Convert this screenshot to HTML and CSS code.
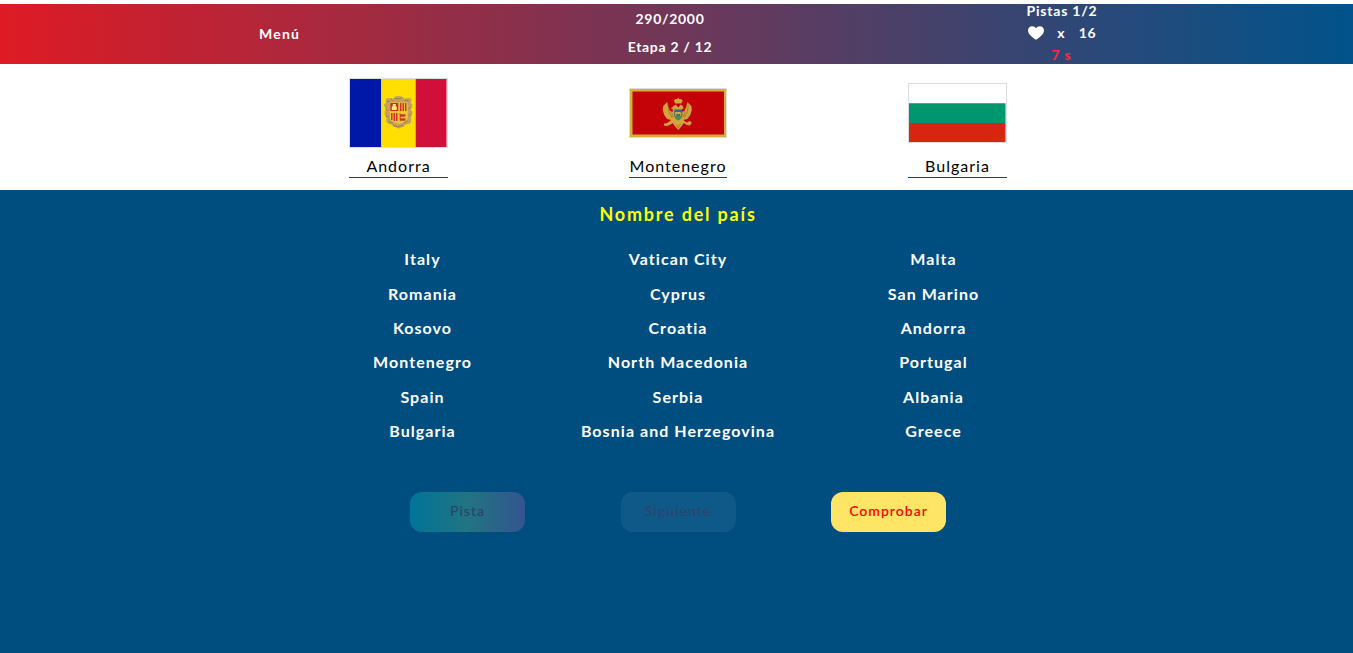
FILE: index.html
```html
<!DOCTYPE html>
<html lang="es">
<head>
<meta charset="utf-8">
<title>Banderas</title>
<link rel="stylesheet" href="styles.css">
</head>
<body>
<header class="topbar">
  <a class="menu">Menú</a>
  <div class="progress"><span>290/2000</span><span>Etapa 2 / 12</span></div>
  <div class="status">
    <span>Pistas 1/2</span>
    <span class="lives"><svg class="heart" viewBox="0 0 16 14"><path d="M8 13.800C6.300 12.700 0 9 0 4.600C0 1.800 1.800 .2 4.100 .2C5.800 .2 7.200 1 8 2.200C8.800 1 10.200 .2 11.900 .2C14.200 .2 16 1.800 16 4.600C16 9 9.700 12.700 8 13.800Z" fill="#fff"/></svg><span>x</span><span>16</span></span>
    <span class="timer">7 s</span>
  </div>
</header>
<section class="flags">
  <figure class="card">
    <div class="frame">
      <svg class="flag andorra" viewBox="0 0 97 68" preserveAspectRatio="none">
        <path d="M0 0h31.500v68H0z" fill="#0018a8"/><path d="M31.500 0H66v68H31.500z" fill="#fedf00"/><path d="M66 0h31v68H66z" fill="#d0103a"/>
        <path d="M36 20q4-2 7 0q2-3 6-3t6 3q4-2 7 0l-1 4q3 1 1 4l-1 3q3 2 1 5l-1 3q2 4-2 6q-4 0-5 3q-4 0-5 2q-1-2-5-2q-1-3-5-3q-4-2-2-6l-2-3q-1-3 1-5l-1-3q-2-3 1-4z" fill="#c2a25c"/>
        <path d="M37 22l3 1M41 20l2 2M45 19l3 1l4-1M55 21l4 1M36 30l2 2M36 37l3 1M39 43l4 1M43 46l5 2l5-2M54 44l4-2M59 37l2-2M59 30l2-2" fill="none" stroke="#8f7447" stroke-width=".8"/>
        <path d="M40 23.500h18V39q-1 4-9 6q-8-2-9-6z" fill="#f0c43b"/>
        <path d="M40.500 24h8v8h-8z" fill="#d52b1e"/><path d="M43 25h3v2l1 1v3h-5v-3l1-1z" fill="#fff080"/>
        <path d="M51 24v8M53.500 24v8M56 24v8M42 34v7M44.500 34v8M47 34v8" stroke="#d52b1e" stroke-width="1.400"/>
        <path d="M50 34.500l1.500 1h4v2h-4l-1 1zM50 38.500l1.500 1h4v2h-4l-1 .5z" fill="#c43a22" stroke="#c43a22" stroke-width=".4"/>
      </svg>
    </div>
    <figcaption class="answer">Andorra</figcaption>
  </figure>
  <figure class="card">
    <div class="frame">
      <svg class="flag montenegro" viewBox="0 0 96 48" preserveAspectRatio="none">
        <path d="M0 0h96v48H0z" fill="#d4af3a"/><path d="M2.500 2.500h91v43h-91z" fill="#c40308"/>
        <g fill="#d4a33c">
          <path d="M48 8.500l.8 1.500h1.700l2 1.500-1.500 3h-6l-1.500-3 2-1.500h1.700z"/>
          <path d="M43.500 17l2-1.500 2.500 3 2.500-3 2 1.500 1 2.500-2 .5v3l2.500-1 2-4 1-5 4 4 .5 4-1.500 5-3 4-4 1 3 2.500 4-1.500 1.500 2-2 2.500-3-.5-3-2-2 3-3.500 4-3.500-4-2-3-3 2-3 1-3-.5.5-2 3-.5 4-3-4-1-3-4-1.500-5 .5-4 4-4 1 5 2 4 2.500 1v-3l-2-.5z"/>
        </g>
        <path d="M38 16l1 7 3 6M41 22l2 6M58 16l-1 7-3 6M55 22l-2 6M46 35l2 4 2-4" fill="none" stroke="#a95b20" stroke-width=".6"/>
        <path d="M44 20.500h8v7H44z" fill="#35668f"/><path d="M44 26.500h8l-1 3-3 2-3-2z" fill="#4f8a45"/>
        <path d="M45 23h5l1 1v3h-1v-2h-4v2h-1z" fill="#d9ae39"/>
      </svg>
    </div>
    <figcaption class="answer">Montenegro</figcaption>
  </figure>
  <figure class="card">
    <div class="frame">
      <svg class="flag bulgaria" viewBox="0 0 97 58" preserveAspectRatio="none"><path d="M0 0h97v19.300H0z" fill="#fff"/><path d="M0 19.300h97v19.700H0z" fill="#00966e"/><path d="M0 39h97v19H0z" fill="#d62612"/></svg>
    </div>
    <figcaption class="answer">Bulgaria</figcaption>
  </figure>
</section>
<main class="board">
  <h1 class="title">Nombre del país</h1>
  <div class="names">
    <span>Italy</span><span>Vatican City</span><span>Malta</span>
    <span>Romania</span><span>Cyprus</span><span>San Marino</span>
    <span>Kosovo</span><span>Croatia</span><span>Andorra</span>
    <span>Montenegro</span><span>North Macedonia</span><span>Portugal</span>
    <span>Spain</span><span>Serbia</span><span>Albania</span>
    <span>Bulgaria</span><span>Bosnia and Herzegovina</span><span>Greece</span>
  </div>
  <div class="actions">
    <button class="btn hint" disabled>Pista</button>
    <button class="btn next" disabled>Siguiente</button>
    <button class="btn check">Comprobar</button>
  </div>
</main>
</body>
</html>
```
FILE: styles.css
```css
* { box-sizing: border-box; }
body {
  margin: 0;
  padding-top: 4px;
  height: 653px;
  display: flex;
  flex-direction: column;
  overflow: hidden;
  background: #fff;
  font-family: Lato, "Liberation Sans", sans-serif;
  letter-spacing: 1px;
}
.topbar {
  height: 60px;
  flex: none;
  display: grid;
  grid-template-columns: 560px 220px 564px;
  grid-template-rows: 58px;
  align-items: center;
  background: linear-gradient(to right, #de1b25, #00538b);
  color: #fff;
  font-size: 14px;
  font-weight: 700;
}
.menu { padding-left: 259px; letter-spacing: 1.200px; }
.progress {
  display: flex;
  flex-direction: column;
  align-items: center;
  line-height: 28px;
  letter-spacing: .7px;
}
.status {
  width: 70px;
  margin-left: 246.500px;
  display: flex;
  flex-direction: column;
  line-height: 22px;
  letter-spacing: .8px;
  white-space: nowrap;
}
.lives {
  display: flex;
  justify-content: space-between;
  align-items: center;
  padding-left: 1.500px;
}
.heart { width: 16px; height: 14px; }
.timer { color: #ff2b3d; text-align: center; }
.flags {
  height: 126px;
  flex: none;
  display: flex;
  justify-content: center;
  gap: 181px;
  padding: 12px 0 12px 3px;
}
.card { width: 98.500px; margin: 0; }
.frame { height: 74px; margin-bottom: 6px; display: flex; align-items: center; }
.flag { display: block; width: 100%; border: 1px solid #ddd; }
.andorra { height: 70px; }
.montenegro { height: 50px; }
.bulgaria { height: 60px; }
.answer {
  height: 22px;
  line-height: 19px;
  text-align: center;
  white-space: nowrap;
  font-size: 16px;
  color: #000;
  border-bottom: 1px solid #004e80;
}
.board {
  flex: 1;
  display: flex;
  flex-direction: column;
  align-items: center;
  background: #004e80;
  padding: 12px 0 0 3px;
}
.title {
  margin: 0;
  font-size: 18px;
  line-height: 24px;
  letter-spacing: 1.800px;
  font-weight: 700;
  color: #ff0;
}
.names {
  display: grid;
  grid-template-columns: repeat(3, 255.500px);
  grid-auto-rows: 34.400px;
  margin-top: 16.200px;
  line-height: 34px;
  text-align: center;
  font-size: 16px;
  font-weight: 700;
  letter-spacing: 1.050px;
  color: #fff;
}
.actions { display: flex; gap: 95.500px; margin-top: 43.400px; }
.btn {
  width: 115px;
  height: 40px;
  padding: 0 0 2px;
  border: 0;
  border-radius: 12px;
  font: 600 14px/1 Lato, "Liberation Sans", sans-serif;
  letter-spacing: 1px;
}
.hint { background: linear-gradient(to right, #007499, #227481 50%, #33558f); color: #2c456f; }
.next { background: #0f5988; color: #2c456f; }
.check { background: #ffe566; color: #f00; }
```
